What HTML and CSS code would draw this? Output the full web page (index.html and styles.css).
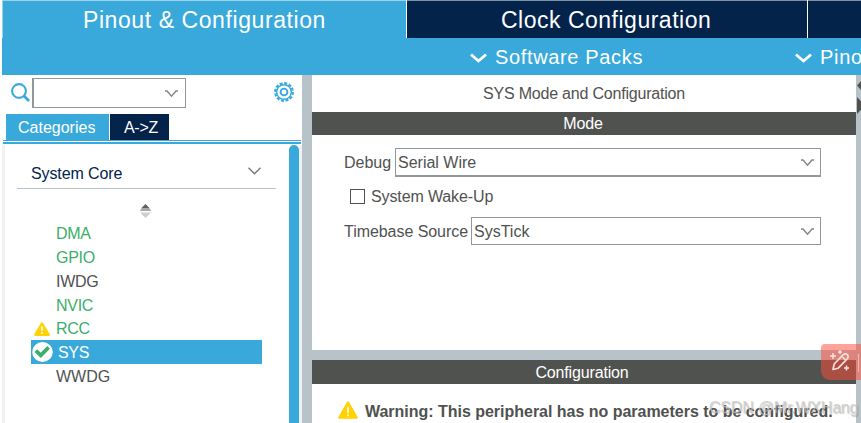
FILE: index.html
```
<!DOCTYPE html>
<html lang="en">
<head>
    <meta charset="UTF-8">
    <meta name="viewport" content="width=device-width, initial-scale=1.0">
    <title>Pinout &amp; Configuration</title>
    <link rel="stylesheet" href="styles.css">
</head>
<body>
    <div class="app">
        <div class="main-tabs">
            <div class="main-tab active"><span class="tab-pinout">Pinout &amp; Configuration</span></div>
            <div class="main-tab clock"><span class="tab-clock">Clock Configuration</span></div>
            <div class="main-tab rest"></div>
        </div>
        <div class="sub-bar">
            <div class="sub-item packs">
                <svg width="17" height="10" viewBox="0 0 17 10"><path d="M1 1.5 L5 5 L8.5 8 L12 5 L16 1.5" fill="none" stroke="#fff" stroke-width="2.8"/></svg>
                <span>Software Packs</span>
            </div>
            <div class="sub-item pinout">
                <svg width="17" height="10" viewBox="0 0 17 10"><path d="M1 1.5 L5 5 L8.5 8 L12 5 L16 1.5" fill="none" stroke="#fff" stroke-width="2.8"/></svg>
                <span>Pinout</span>
            </div>
        </div>
        <div class="content">
            <div class="sidebar">
                <div class="search-row">
                    <svg class="search-icon" width="20" height="20" viewBox="0 0 20 20"><circle cx="8" cy="8" r="6.9" fill="none" stroke="#39a9dc" stroke-width="2.1"/><path d="M13 13 L18 18" stroke="#39a9dc" stroke-width="2.8"/></svg>
                    <div class="search-box">
                        <svg width="13" height="8" viewBox="0 0 13 8"><path d="M0 1 H2 L6.5 6.2 L11 1 H13" fill="none" stroke="#858585" stroke-width="1.5"/></svg>
                    </div>
                    <svg class="gear" width="20" height="20" viewBox="0 0 20 20"><circle cx="10" cy="10" r="8.8" fill="none" stroke="#39a9dc" stroke-width="2.2" stroke-dasharray="3 1.6"/><circle cx="10" cy="10" r="7.3" fill="none" stroke="#39a9dc" stroke-width="1.4"/><circle cx="10" cy="10" r="3.4" fill="none" stroke="#39a9dc" stroke-width="1.9"/></svg>
                </div>
                <div class="side-tabs">
                    <div class="side-tab categories"><span>Categories</span></div>
                    <div class="side-tab az"><span>A-&gt;Z</span></div>
                </div>
                <div class="side-line"></div>
                <div class="tree">
                    <div class="tree-body">
                        <div class="group">
                            <span>System Core</span>
                            <svg width="13" height="8" viewBox="0 0 13 8"><path d="M.5 .8 L6.5 6.7 L12.5 .8" fill="none" stroke="#777" stroke-width="1.4"/></svg>
                        </div>
                        <div class="sorter">
                            <svg width="11" height="14" viewBox="0 0 11 14"><path d="M5.5 0 L9.5 4 H1.5z" fill="#606060"/><path d="M1.5 4 H9.5 L11 7 H0z" fill="#a8a8a8"/><path d="M0 8.5 H11 L5.5 14z" fill="#cdcdcd"/></svg>
                        </div>
                        <ul class="list">
                            <li class="on"><span>DMA</span></li>
                            <li class="on"><span>GPIO</span></li>
                            <li><span>IWDG</span></li>
                            <li class="on"><span>NVIC</span></li>
                            <li class="on rcc">
                                <svg class="warn-small" width="16" height="14" viewBox="0 0 16 14"><path d="M8 1.2 L14.8 12.8 H1.2z" fill="#ffd200" stroke="#ffd200" stroke-width="2.2" stroke-linejoin="round"/><path d="M8 4.2 V8.8 M8 10 V12" stroke="#fff" stroke-width="1.6"/></svg>
                                <span>RCC</span>
                            </li>
                            <li class="selected">
                                <svg class="check" width="21" height="20" viewBox="0 0 21 20"><ellipse cx="10.5" cy="10" rx="10.3" ry="9.9" fill="#fff"/><path d="M3.8 8.6 L8.8 13.4 L16.6 5.4" fill="none" stroke="#3cae6b" stroke-width="3.8"/></svg>
                                <span>SYS</span>
                            </li>
                            <li class="wwdg"><span>WWDG</span></li>
                        </ul>
                    </div>
                    <div class="scrollbar"></div>
                </div>
            </div>
            <div class="panel">
                <div class="panel-title"><span>SYS Mode and Configuration</span></div>
                <div class="section-bar mode-bar"><span>Mode</span></div>
                <div class="mode">
                    <div class="field">
                        <span class="debug-label">Debug</span>
                        <div class="combo focus">
                            <span class="serial">Serial Wire</span>
                            <svg width="13" height="8" viewBox="0 0 13 8"><path d="M0 1 H2 L6.5 6.2 L11 1 H13" fill="none" stroke="#858585" stroke-width="1.5"/></svg>
                        </div>
                    </div>
                    <div class="wakeup">
                        <div class="checkbox"></div>
                        <span>System Wake-Up</span>
                    </div>
                    <div class="field">
                        <span class="timebase-label">Timebase Source</span>
                        <div class="combo">
                            <span class="systick">SysTick</span>
                            <svg width="13" height="8" viewBox="0 0 13 8"><path d="M0 1 H2 L6.5 6.2 L11 1 H13" fill="none" stroke="#858585" stroke-width="1.5"/></svg>
                        </div>
                    </div>
                </div>
                <div class="section-bar config-bar"><span>Configuration</span></div>
                <div class="warning">
                    <svg width="20" height="18" viewBox="0 0 20 18"><path d="M10 1.5 L18.6 16.5 H1.4z" fill="#ffd200" stroke="#ffd200" stroke-width="2.4" stroke-linejoin="round"/><path d="M10 5.5 V11.8 M10 13.3 V15.3" stroke="#fff" stroke-width="1.5"/></svg>
                    <span>Warning: This peripheral has no parameters to be configured.</span>
                </div>
            </div>
            <div class="splitter">
                <svg width="5" height="39" viewBox="0 0 5 39"><path d="M5 6 L1 10.5 L5 15z M1 22 L9 30.5 L1 39z" fill="#505250"/></svg>
            </div>
        </div>
        <div class="assist">
            <svg width="22" height="22" viewBox="0 0 22 22"><path d="M4 19.5 L5.2 14 L14 4.8 Q16.5 2.8 18.5 4.8 Q20 7 18 9.2 L9.2 18.2z M13.5 7 L16.5 10" fill="none" stroke="#f6dcd8" stroke-width="1.7" stroke-linejoin="round"/><path d="M4 3 V9 M1 6 H7 M11 0 V4 M9 2 H13 M17.5 15.5 V20.5 M15 18 H20" stroke="#f6e4e1" stroke-width="1.5"/></svg>
            <div class="assist-line"></div>
        </div>
        <div class="watermark"><span>CSDN @Mr.WXHang</span></div>
    </div>
</body>
</html>
```

FILE: styles.css
```
body {
    margin: 0;
    background-color: #fff;
    font-family: "Liberation Sans", Arial, sans-serif;
    font-size: 16px;
    color: #505250;
    overflow: hidden;
}

.app {
    position: relative;
    width: 861px;
    height: 423px;
    padding-left: 2px;
    box-sizing: border-box;
    overflow: hidden;
    display: flex;
    flex-direction: column;
    white-space: nowrap;
}

svg {
    display: block;
    flex-shrink: 0;
}

/* top tabs */
.main-tabs {
    display: flex;
    height: 38px;
    gap: 1px;
}

.main-tab {
    box-sizing: border-box;
    background-color: #03234b;
    border-top: 1px solid #8191a5;
    color: #fff;
    font-size: 23px;
    line-height: 38px;
}

.main-tab.active {
    width: 404px;
    background-color: #39a9dc;
    border-top-color: #9cd4ed;
    border-left: 1px solid #9cd4ed;
    padding-left: 80px;
}

.main-tab.clock {
    width: 400px;
    padding-left: 94px;
}

.main-tab.rest {
    flex: 1;
}

.tab-pinout {
    letter-spacing: 0.58px;
}

.tab-clock {
    letter-spacing: 0.5px;
}

.sub-bar {
    display: flex;
    height: 37px;
    background-color: #39a9dc;
    color: #fff;
    font-size: 20px;
    letter-spacing: 0.65px;
}

.sub-item {
    display: flex;
    align-items: center;
    gap: 8px;
    padding: 2px 0 0 468px;
}

.sub-item.pinout {
    padding-left: 152px;
}

.content {
    display: flex;
    flex: 1;
    min-height: 0;
}

/* left side */
.sidebar {
    width: 300px;
    display: flex;
    flex-direction: column;
}

.search-row {
    display: flex;
    height: 39px;
    padding: 3px 8px 0 9px;
    box-sizing: border-box;
}

.search-icon {
    margin-top: 5px;
}

.search-box {
    width: 154px;
    height: 30px;
    box-sizing: border-box;
    border: 1px solid #90989e;
    border-left-width: 2px;
    margin-left: 1px;
    padding: 2px 7px 0 0;
    display: flex;
    align-items: center;
    justify-content: flex-end;
}

.gear {
    margin: 4px 0 0 auto;
}

.side-tabs {
    display: flex;
    gap: 1px;
    padding-left: 4px;
    height: 26px;
    color: #fff;
    line-height: 28px;
}

.side-tab {
    box-sizing: border-box;
    padding-left: 12px;
}

.categories {
    width: 103px;
    background-color: #39a9dc;
}

.az {
    width: 59px;
    background-color: #03234b;
    padding-left: 14px;
    letter-spacing: -0.3px;
}

.side-line {
    height: 1px;
    margin: 0 1px;
    border-top: 1px solid #39a9dc;
    border-bottom: 2px solid #39a9dc;
}

.tree {
    display: flex;
    flex: 1;
    margin-top: 1px;
    border-left: 3px solid #f0f1f4;
    border-right: 3px solid #f0f1f4;
}

.tree-body {
    width: 284px;
}

.group {
    height: 43px;
    margin: 0 13px 0 12px;
    padding: 0 15px 0 14px;
    border-bottom: 1px solid #b7c3c9;
    display: flex;
    justify-content: space-between;
    color: #03234b;
    line-height: 57px;
    letter-spacing: -0.1px;
}

.group svg {
    margin-top: 22px;
}

.sorter {
    height: 32px;
    padding: 15px 0 0 135px;
    box-sizing: border-box;
}

.list {
    list-style: none;
    margin: 0 27px 0 26px;
    padding: 0;
    letter-spacing: -0.3px;
}

.list li {
    height: 24px;
    line-height: 26px;
    padding-left: 25px;
    display: flex;
}

.list svg {
    align-self: center;
}

.list .on {
    color: #3cae6b;
}

.list .rcc {
    height: 23px;
    line-height: 24px;
    padding-left: 3px;
    gap: 6px;
}

.list .wwdg {
    letter-spacing: 0;
}

.list .selected {
    background-color: #39a9dc;
    color: #fff;
    padding-left: 1px;
    gap: 5px;
}

.scrollbar {
    flex: 1;
    background-color: #39a9dc;
    border-radius: 5px 5px 0 0;
}

/* right side */
.panel {
    width: 544px;
    border-left: 10px solid #b7c3c9;
    display: flex;
    flex-direction: column;
}

.panel-title {
    height: 37px;
    line-height: 37px;
    text-align: center;
    letter-spacing: -0.2px;
    flex-shrink: 0;
}

.section-bar {
    background-color: #505250;
    color: #fff;
    text-align: center;
    letter-spacing: -0.15px;
    flex-shrink: 0;
}

.mode-bar {
    height: 23px;
    line-height: 24px;
    text-indent: -2px;
}

.config-bar {
    height: 24px;
    line-height: 25px;
    border-top: 10px solid #b7c3c9;
    text-indent: -4px;
}

.mode {
    height: 215px;
    box-sizing: border-box;
    padding: 13px 35px 0 32px;
    flex-shrink: 0;
}

.field {
    display: flex;
    justify-content: space-between;
    gap: 3px;
    line-height: 30px;
    height: 28px;
}

.combo {
    flex: 1;
    height: 28px;
    box-sizing: border-box;
    border: 1px solid #90989e;
    padding: 1px 6px 0 2px;
    line-height: 26px;
    display: flex;
    justify-content: space-between;
}

.combo svg {
    margin-top: 9px;
}

.combo.focus {
    height: 29px;
    border-bottom-width: 2px;
}

.debug-label {
    width: 48px;
}

.timebase-label {
    width: 124px;
    letter-spacing: -0.05px;
}

.wakeup {
    display: flex;
    align-items: center;
    height: 41px;
    padding-left: 6px;
    gap: 6px;
    letter-spacing: -0.12px;
}

.checkbox {
    width: 15px;
    height: 15px;
    box-sizing: border-box;
    border: 1px solid #505250;
}

.warning {
    display: flex;
    padding: 17px 0 0 26px;
    gap: 7px;
    font-weight: bold;
    line-height: 22px;
    letter-spacing: -0.02px;
}

.splitter {
    flex: 1;
    background-color: #b7c3c9;
}

/* floating button and watermark lie over the page */
.assist {
    position: absolute;
    left: 821px;
    top: 344px;
    width: 40px;
    height: 36px;
    box-sizing: border-box;
    padding: 6px 0 0 8px;
    background-color: rgba(255, 77, 60, 0.52);
    border-radius: 4px 0 0 9px;
    display: flex;
    gap: 7px;
}

.assist-line {
    width: 1px;
    height: 18px;
    margin-top: 4px;
    background-color: #e5bdb9;
}

.watermark {
    position: absolute;
    left: 709px;
    top: 398px;
    font-size: 16px;
    line-height: 20px;
    letter-spacing: -0.2px;
    color: rgba(200, 200, 200, 0.75);
    text-shadow: 1px 1px 1px rgba(100, 100, 100, 0.35);
}
```
